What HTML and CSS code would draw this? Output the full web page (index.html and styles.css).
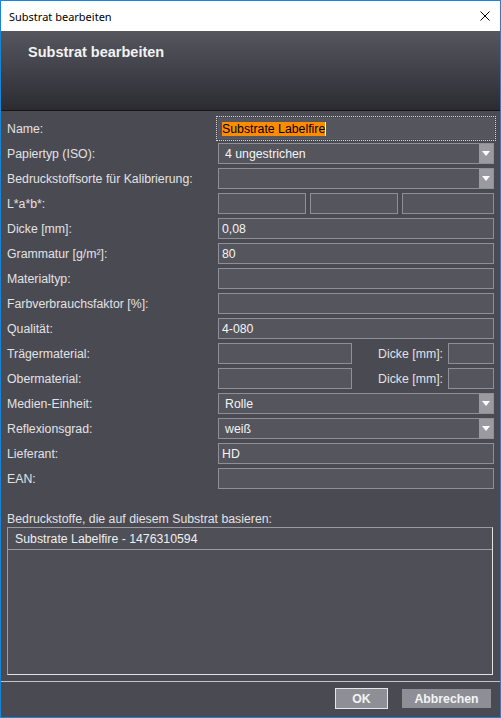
FILE: index.html
```html
<!DOCTYPE html>
<html lang="de">
<head>
<meta charset="utf-8">
<title>Substrat bearbeiten</title>
<link rel="stylesheet" href="styles.css">
</head>
<body>
<div class="window">
  <div class="titlebar">
    <span class="titlebar-text">Substrat bearbeiten</span>
    <svg class="close" width="10" height="10" viewBox="0 0 10 10"><path d="M0.5 0.5 L9.5 9.5 M9.5 0.5 L0.5 9.5" stroke="#000" stroke-width="1" fill="none"/></svg>
  </div>
  <div class="header">
    <h1 class="header-title">Substrat bearbeiten</h1>
  </div>
  <div class="content">
    <div class="form">
      <div class="label">Name:</div>
      <div class="field input focused"><span class="sel">Substrate Labelfire</span><span class="caret"></span></div>

      <div class="label">Papiertyp (ISO):</div>
      <div class="field select"><span class="select-text">4 ungestrichen</span><span class="arrow"></span></div>

      <div class="label">Bedruckstoffsorte für Kalibrierung:</div>
      <div class="field select"><span class="select-text"></span><span class="arrow"></span></div>

      <div class="label">L*a*b*:</div>
      <div class="lab">
        <div class="field input"></div>
        <div class="field input"></div>
        <div class="field input"></div>
      </div>

      <div class="label">Dicke [mm]:</div>
      <div class="field input">0,08</div>

      <div class="label">Grammatur [g/m²]:</div>
      <div class="field input">80</div>

      <div class="label">Materialtyp:</div>
      <div class="field input"></div>

      <div class="label">Farbverbrauchsfaktor [%]:</div>
      <div class="field input"></div>

      <div class="label">Qualität:</div>
      <div class="field input">4-080</div>

      <div class="label">Trägermaterial:</div>
      <div class="split">
        <div class="field input wide"></div>
        <div class="sublabel">Dicke [mm]:</div>
        <div class="field input small"></div>
      </div>

      <div class="label">Obermaterial:</div>
      <div class="split">
        <div class="field input wide"></div>
        <div class="sublabel">Dicke [mm]:</div>
        <div class="field input small"></div>
      </div>

      <div class="label">Medien-Einheit:</div>
      <div class="field select"><span class="select-text">Rolle</span><span class="arrow"></span></div>

      <div class="label">Reflexionsgrad:</div>
      <div class="field select"><span class="select-text">weiß</span><span class="arrow"></span></div>

      <div class="label">Lieferant:</div>
      <div class="field input">HD</div>

      <div class="label">EAN:</div>
      <div class="field input"></div>
    </div>

    <div class="list-label">Bedruckstoffe, die auf diesem Substrat basieren:</div>
    <div class="list">
      <div class="list-row">Substrate Labelfire - 1476310594</div>
    </div>
  </div>
  <div class="footer">
    <button class="btn btn-ok">OK</button>
    <button class="btn btn-cancel">Abbrechen</button>
  </div>
</div>
</body>
</html>
```

FILE: styles.css
```css
html, body {
  margin: 0;
  padding: 0;
  background: #4a4a52;
}

.window {
  width: 501px;
  height: 718px;
  box-sizing: border-box;
  border: 1px solid #1a84d8;
  background: #4a4a52;
  display: flex;
  flex-direction: column;
  font-family: "Liberation Sans", Arial, sans-serif;
  font-size: 12.3px;
  color: #e4e4e6;
}

.titlebar {
  height: 30px;
  background: #ffffff;
  display: flex;
  align-items: center;
  justify-content: space-between;
  padding: 0 10px 0 8px;
  flex: none;
}

.titlebar-text {
  font-family: "Noto Sans", "Open Sans", sans-serif;
  font-size: 11px;
  color: #000;
}

.close {
  display: block;
}

.header {
  flex: none;
  background: linear-gradient(to bottom, #55565e 0%, #3f4047 55%, #2b2b31 100%);
  border-bottom: 1px solid #151518;
  padding: 13px 0 0 27px;
  box-sizing: border-box;
  height: 80px;
}

.header-title {
  margin: 0;
  font-family: "Liberation Sans", Arial, sans-serif;
  font-weight: bold;
  font-size: 14.5px;
  line-height: 17px;
  color: #f2f2f4;
}

.content {
  flex: none;
  padding: 7px 7px 0 6px;
}

.form {
  display: grid;
  grid-template-columns: 211px 276px;
  grid-auto-rows: 21px;
  row-gap: 4px;
}

.label {
  display: flex;
  align-items: center;
  color: #e2e2e4;
  white-space: nowrap;
}

.field {
  box-sizing: border-box;
  height: 21px;
  background: #55555d;
  border: 1px solid #8f8f94;
  color: #f4f4f4;
  display: flex;
  align-items: center;
  white-space: nowrap;
  overflow: hidden;
}

.input {
  padding-left: 3px;
}

.focused {
  outline: 1px dotted #d8d8d8;
  outline-offset: 1px;
  border-color: #5a5a62;
}

.sel {
  background: #ff8c00;
  color: #000;
  line-height: 14px;
}

.caret {
  display: inline-block;
  width: 1px;
  height: 14px;
  background: #ffffff;
}

.select {
  padding-left: 6px;
}

.select-text {
  flex: 1;
}

.arrow {
  flex: none;
  width: 15px;
  height: 21px;
  margin: -1px -1px -1px 0;
  background: #9a9aa0;
  position: relative;
}

.arrow::after {
  content: "";
  position: absolute;
  left: 3px;
  top: 8px;
  border-left: 4.5px solid transparent;
  border-right: 4.5px solid transparent;
  border-top: 5px solid #ffffff;
}

.lab {
  display: grid;
  grid-template-columns: 88px 88px 92px;
  column-gap: 4px;
}

.split {
  display: flex;
  align-items: center;
}

.wide {
  width: 134px;
  flex: none;
}

.sublabel {
  flex: 1;
  text-align: right;
  padding-right: 5px;
  color: #e2e2e4;
}

.small {
  width: 46px;
  flex: none;
}

.list-label {
  margin-top: 23px;
  line-height: 15px;
  height: 15px;
  color: #e2e2e4;
}

.list {
  box-sizing: border-box;
  height: 148px;
  border: 1px solid #9c9ca0;
  border-right-color: #e2e2e4;
  border-bottom-color: #e2e2e4;
  background: #4f4f57;
}

.list-row {
  height: 21px;
  border-bottom: 1px solid #9c9ca0;
  padding-left: 7px;
  display: flex;
  align-items: center;
  color: #f0f0f0;
}

.footer {
  margin-top: 6px;
  border-top: 1px solid #c4c4c8;
  padding: 6px 8px 0 0;
  display: flex;
  justify-content: flex-end;
  gap: 13px;
}

.btn {
  box-sizing: border-box;
  height: 21px;
  margin: 0;
  padding: 0;
  background: #8e8e96;
  color: #f4f4f4;
  font-family: "Liberation Sans", Arial, sans-serif;
  font-weight: bold;
  font-size: 12.3px;
  border: 1px solid #4a4a52;
}

.btn-ok {
  width: 53px;
  border-color: #e6e6e8;
}

.btn-cancel {
  width: 91px;
}
```
